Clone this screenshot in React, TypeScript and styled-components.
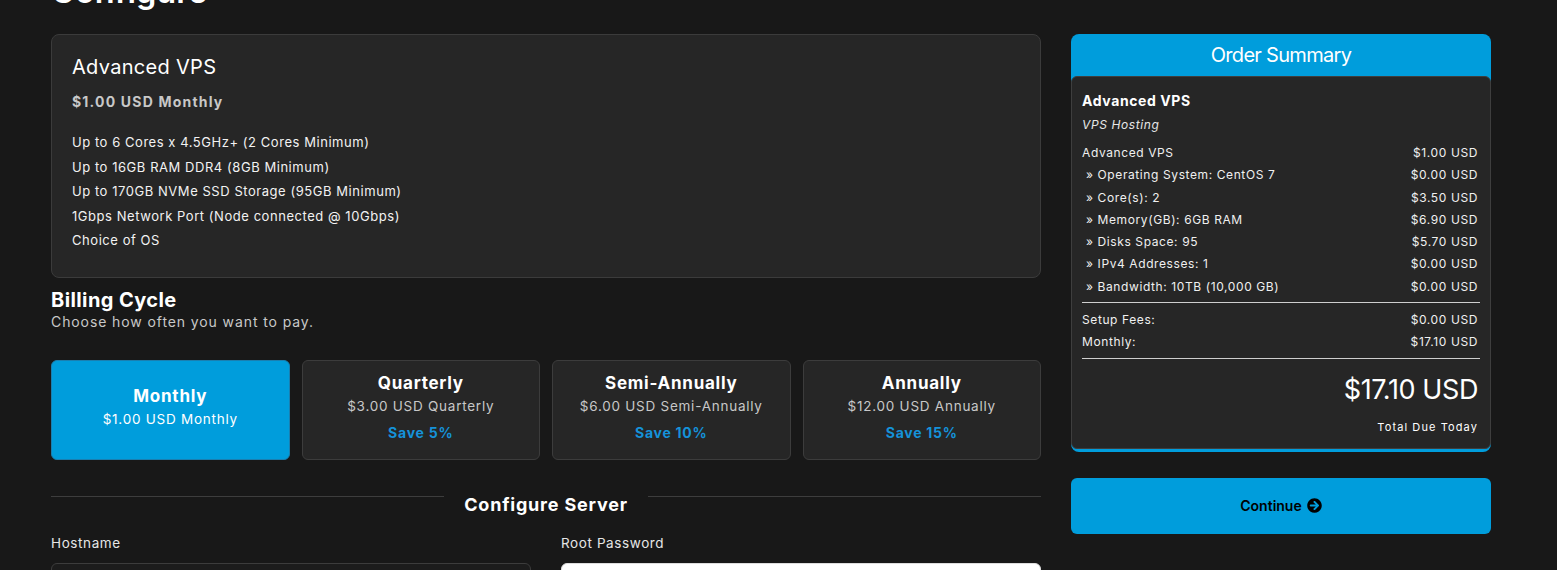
import React from 'react';
import styled, { createGlobalStyle } from 'styled-components';
import { FaArrowCircleRight } from 'react-icons/fa';

const GlobalStyle = createGlobalStyle`
 html, body {
  margin: 0;
  padding: 0;
  background: #181818;
  color: #fff;
  font-family: Inter, "Noto Sans", sans-serif;
  overflow: hidden;
 }
`;

const Page = styled.div`
 width: 1440px;
 padding-left: 51px;
 height: 570px;
 overflow: hidden;
`;

const PageTitle = styled.h1`
 margin: -30px 0 20px;
 font-size: 32.5px;
 font-weight: 600;
 line-height: 44px;
`;

const Layout = styled.div`
 display: grid;
 grid-template-columns: 990px 420px;
 gap: 30px;
 align-items: start;
`;

const Main = styled.div`
 display: flex;
 flex-direction: column;
`;

const ProductBox = styled.div`
 background: #262626;
 border: 1px solid #3b3b3b;
 border-radius: 8px;
 padding: 18px 20px 20px;
 height: 244px;
 box-sizing: border-box;
`;

const ProductName = styled.div`
 font-size: 20px;
 font-weight: 400;
 line-height: 28px;
 letter-spacing: 0.3px;
`;

const ProductPrice = styled.div`
 margin-top: 12px;
 font-size: 14px;
 font-weight: 700;
 color: #c8c8c8;
 letter-spacing: 1.2px;
`;

const FeatureList = styled.ul`
 list-style: none;
 margin: 20px 0 0;
 padding: 0;
 font-size: 13px;
 line-height: 24.5px;
 letter-spacing: 0.55px;
 color: #f2f2f2;
`;

const SectionTitle = styled.h2`
 margin: 10px 0 0;
 font-size: 20px;
 font-weight: 700;
 line-height: 24px;
 letter-spacing: 0.4px;
`;

const SectionSub = styled.p`
 margin: 0;
 font-size: 14px;
 color: #c8c8c8;
 letter-spacing: 0.9px;
 line-height: 20px;
`;

const CycleGrid = styled.div`
 margin-top: 28px;
 display: grid;
 grid-template-columns: repeat(4, 1fr);
 gap: 12px;
`;

const CycleCard = styled.div<{ $active?: boolean }>`
 height: 100px;
 box-sizing: border-box;
 padding-bottom: 6px;
 border-radius: 6px;
 border: 1px solid ${p => (p.$active ? '#1a7fb0' : '#3c3c3c')};
 background: ${p => (p.$active ? '#009ddc' : '#262626')};
 display: flex;
 flex-direction: column;
 align-items: center;
 justify-content: center;
 text-align: center;
 letter-spacing: 0.75px;
`;

const CycleName = styled.div`
 font-size: 17px;
 font-weight: 700;
 line-height: 22px;
`;

const CyclePrice = styled.div<{ $active?: boolean }>`
 font-size: 13.5px;
 line-height: 20px;
 margin-top: 2px;
 color: ${p => (p.$active ? '#fff' : '#c8c8c8')};
`;

const CycleSave = styled.div`
 margin-top: 7px;
 font-size: 14px;
 font-weight: 700;
 color: #1592d9;
 line-height: 20px;
`;

const Divider = styled.div`
 margin-top: 28px;
 display: flex;
 align-items: flex-start;
 gap: 20px;
 &::before,
 &::after {
  content: '';
  flex: 1;
  height: 1px;
  background: #3d3d3d;
  margin-top: 8px;
 }
`;

const DividerText = styled.span`
 font-size: 18px;
 font-weight: 700;
 letter-spacing: 0.8px;
 line-height: 22px;
 padding-top: 6px;
`;

const FieldGrid = styled.div`
 margin-top: 17px;
 display: grid;
 grid-template-columns: 1fr 1fr;
 gap: 30px;
`;

const Field = styled.div`
 display: flex;
 flex-direction: column;
`;

const Label = styled.label`
 font-size: 13.5px;
 letter-spacing: 0.6px;
 color: #e6e6e6;
 line-height: 20px;
 margin-bottom: 10px;
`;

const Input = styled.input<{ $light?: boolean }>`
 height: 38px;
 box-sizing: border-box;
 border-radius: 6px;
 border: 1px solid ${p => (p.$light ? '#ddd' : '#3c3c3c')};
 background: ${p => (p.$light ? '#fff' : '#1c1c1c')};
 outline: none;
`;

const Side = styled.div`
 display: flex;
 flex-direction: column;
 gap: 26px;
`;

const Summary = styled.div`
 background: #009ddc;
 border-radius: 8px;
 padding-bottom: 3px;
`;

const SummaryHeader = styled.div`
 height: 42px;
 display: flex;
 align-items: center;
 justify-content: center;
 font-size: 20px;
 font-weight: 400;
 color: #fff;
 letter-spacing: -0.7px;
`;

const SummaryBody = styled.div`
 background: #262626;
 border: 1px solid #3e3e3e;
 border-radius: 6px;
 padding: 14px 10px 13px;
 letter-spacing: 0.6px;
`;

const SumProduct = styled.div`
 font-size: 14px;
 font-weight: 700;
 line-height: 20px;
`;

const SumGroup = styled.div`
 margin-top: 4px;
 font-size: 12px;
 font-style: italic;
 color: #e6e6e6;
 line-height: 20px;
`;

const SumLines = styled.div`
 margin-top: 7px;
 padding-bottom: 4px;
 border-bottom: 1px solid #cfcfcf;
`;

const SumRow = styled.div<{ $sub?: boolean }>`
 display: flex;
 justify-content: space-between;
 font-size: 12px;
 line-height: 22.3px;
 color: #f0f0f0;
 padding-left: ${p => (p.$sub ? '4px' : '0')};
 padding-right: 2px;
`;

const SumTotals = styled.div`
 padding: 6px 0 4px;
 border-bottom: 1px solid #cfcfcf;
`;

const TotalAmount = styled.div`
 margin-top: 13px;
 text-align: right;
 font-size: 27px;
 line-height: 36px;
 letter-spacing: -0.4px;
 padding-right: 2px;
`;

const TotalLabel = styled.div`
 margin-top: 11px;
 text-align: right;
 font-size: 11px;
 line-height: 16px;
 letter-spacing: 1.1px;
 padding-right: 2px;
`;

const ContinueButton = styled.button`
 height: 56px;
 border: none;
 border-radius: 6px;
 background: #009ddc;
 color: #000;
 font-family: Inter, "Noto Sans", sans-serif;
 font-size: 14px;
 font-weight: 600;
 display: flex;
 align-items: center;
 justify-content: center;
 gap: 5px;
 cursor: pointer;
 svg {
  width: 15px;
  height: 15px;
 }
`;

const features = [
 'Up to 6 Cores x 4.5GHz+ (2 Cores Minimum)',
 'Up to 16GB RAM DDR4 (8GB Minimum)',
 'Up to 170GB NVMe SSD Storage (95GB Minimum)',
 '1Gbps Network Port (Node connected @ 10Gbps)',
 'Choice of OS',
];

const cycles = [
 { name: 'Monthly', price: '$1.00 USD Monthly', active: true },
 { name: 'Quarterly', price: '$3.00 USD Quarterly', save: 'Save 5%' },
 { name: 'Semi-Annually', price: '$6.00 USD Semi-Annually', save: 'Save 10%' },
 { name: 'Annually', price: '$12.00 USD Annually', save: 'Save 15%' },
];

const lines = [
 { label: 'Advanced VPS', price: '$1.00 USD' },
 { label: '» Operating System: CentOS 7', price: '$0.00 USD', sub: true },
 { label: '» Core(s): 2', price: '$3.50 USD', sub: true },
 { label: '» Memory(GB): 6GB RAM', price: '$6.90 USD', sub: true },
 { label: '» Disks Space: 95', price: '$5.70 USD', sub: true },
 { label: '» IPv4 Addresses: 1', price: '$0.00 USD', sub: true },
 { label: '» Bandwidth: 10TB (10,000 GB)', price: '$0.00 USD', sub: true },
];

const App: React.FC = () => {
 return (
  <>
   <GlobalStyle />
   <Page>
    <PageTitle>Configure</PageTitle>
    <Layout>
     <Main>
      <ProductBox>
       <ProductName>Advanced VPS</ProductName>
       <ProductPrice>$1.00 USD Monthly</ProductPrice>
       <FeatureList>
        {features.map(f => (
         <li key={f}>{f}</li>
        ))}
       </FeatureList>
      </ProductBox>

      <SectionTitle>Billing Cycle</SectionTitle>
      <SectionSub>Choose how often you want to pay.</SectionSub>

      <CycleGrid>
       {cycles.map(c => (
        <CycleCard key={c.name} $active={c.active}>
         <CycleName>{c.name}</CycleName>
         <CyclePrice $active={c.active}>{c.price}</CyclePrice>
         {c.save && <CycleSave>{c.save}</CycleSave>}
        </CycleCard>
       ))}
      </CycleGrid>

      <Divider>
       <DividerText>Configure Server</DividerText>
      </Divider>

      <FieldGrid>
       <Field>
        <Label>Hostname</Label>
        <Input />
       </Field>
       <Field>
        <Label>Root Password</Label>
        <Input $light type="password" />
       </Field>
      </FieldGrid>
     </Main>

     <Side>
      <Summary>
       <SummaryHeader>Order Summary</SummaryHeader>
       <SummaryBody>
        <SumProduct>Advanced VPS</SumProduct>
        <SumGroup>VPS Hosting</SumGroup>
        <SumLines>
         {lines.map(l => (
          <SumRow key={l.label} $sub={l.sub}>
           <span>{l.label}</span>
           <span>{l.price}</span>
          </SumRow>
         ))}
        </SumLines>
        <SumTotals>
         <SumRow>
          <span>Setup Fees:</span>
          <span>$0.00 USD</span>
         </SumRow>
         <SumRow>
          <span>Monthly:</span>
          <span>$17.10 USD</span>
         </SumRow>
        </SumTotals>
        <TotalAmount>$17.10 USD</TotalAmount>
        <TotalLabel>Total Due Today</TotalLabel>
       </SummaryBody>
      </Summary>
      <ContinueButton>
       Continue <FaArrowCircleRight />
      </ContinueButton>
     </Side>
    </Layout>
   </Page>
  </>
 );
};

export default App;
